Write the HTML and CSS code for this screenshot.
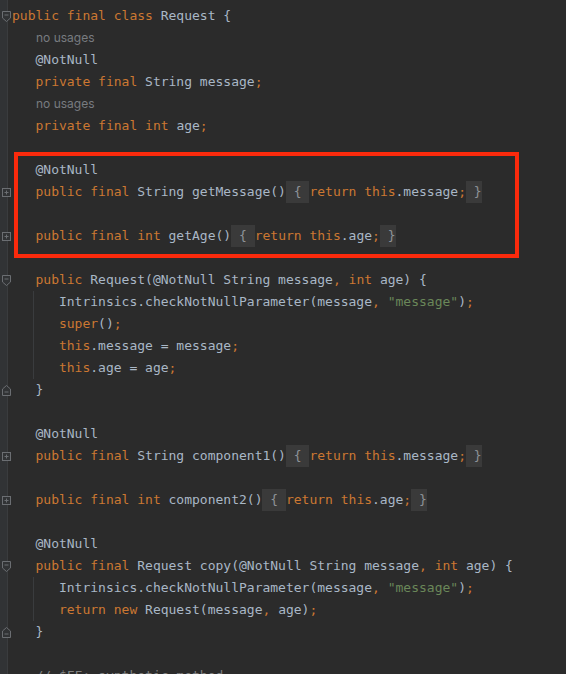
FILE: index.html
```html
<!DOCTYPE html>
<html>
<head>
<meta charset="utf-8">
<link rel="stylesheet" href="styles.css">
</head>
<body>
<div class="editor">
  <div class="gutter">
    <div class="row"><svg class="fold" width="9" height="11" viewBox="0 0 9 11"><path d="M0.5 0.5H8.5V7L4.5 10.5L0.5 7Z"/><path d="M2.5 4H6.5"/></svg></div>
    <div class="row"></div><div class="row"></div><div class="row"></div><div class="row"></div><div class="row"></div><div class="row"></div><div class="row"></div>
    <div class="row"><svg class="fold" width="9" height="9" viewBox="0 0 9 9"><rect x="0.5" y="0.5" width="8" height="8"/><path d="M2.5 4.5H6.5M4.5 2.5V6.5"/></svg></div>
    <div class="row"></div>
    <div class="row"><svg class="fold" width="9" height="9" viewBox="0 0 9 9"><rect x="0.5" y="0.5" width="8" height="8"/><path d="M2.5 4.5H6.5M4.5 2.5V6.5"/></svg></div>
    <div class="row"></div>
    <div class="row"><svg class="fold" width="9" height="11" viewBox="0 0 9 11"><path d="M0.5 0.5H8.5V7L4.5 10.5L0.5 7Z"/><path d="M2.5 4H6.5"/></svg></div>
    <div class="row"></div><div class="row"></div><div class="row"></div><div class="row"></div>
    <div class="row"><svg class="fold" width="9" height="11" viewBox="0 0 9 11"><path d="M0.5 10.5H8.5V4L4.5 0.5L0.5 4Z"/><path d="M2.5 7H6.5"/></svg></div>
    <div class="row"></div><div class="row"></div>
    <div class="row"><svg class="fold" width="9" height="9" viewBox="0 0 9 9"><rect x="0.5" y="0.5" width="8" height="8"/><path d="M2.5 4.5H6.5M4.5 2.5V6.5"/></svg></div>
    <div class="row"></div>
    <div class="row"><svg class="fold" width="9" height="9" viewBox="0 0 9 9"><rect x="0.5" y="0.5" width="8" height="8"/><path d="M2.5 4.5H6.5M4.5 2.5V6.5"/></svg></div>
    <div class="row"></div><div class="row"></div>
    <div class="row"><svg class="fold" width="9" height="11" viewBox="0 0 9 11"><path d="M0.5 0.5H8.5V7L4.5 10.5L0.5 7Z"/><path d="M2.5 4H6.5"/></svg></div>
    <div class="row"></div><div class="row"></div>
    <div class="row"><svg class="fold" width="9" height="11" viewBox="0 0 9 11"><path d="M0.5 10.5H8.5V4L4.5 0.5L0.5 4Z"/><path d="M2.5 7H6.5"/></svg></div>
    <div class="row"></div><div class="row"></div>
  </div>
  <div class="code">
<div class="line"><span class="kw">public final class </span>Request {</div>
<div class="line inlay">no usages</div>
<div class="line">   @NotNull</div>
<div class="line">   <span class="kw">private final </span>String message<span class="kw">;</span></div>
<div class="line inlay">no usages</div>
<div class="line">   <span class="kw">private final int </span>age<span class="kw">;</span></div>
<div class="line"> </div>
<div class="line">   @NotNull</div>
<div class="line">   <span class="kw">public final </span>String getMessage()<span class="fb"> { </span><span class="kw">return this</span>.message<span class="kw">;</span><span class="fb"> }</span></div>
<div class="line"> </div>
<div class="line">   <span class="kw">public final int </span>getAge()<span class="fb"> { </span><span class="kw">return this</span>.age<span class="kw">;</span><span class="fb"> }</span></div>
<div class="line"> </div>
<div class="line">   <span class="kw">public </span>Request(@NotNull String message<span class="kw">, int </span>age) {</div>
<div class="line guide">      Intrinsics.checkNotNullParameter(message<span class="kw">, </span><span class="str">"message"</span>)<span class="kw">;</span></div>
<div class="line guide">      <span class="kw">super</span>()<span class="kw">;</span></div>
<div class="line guide">      <span class="kw">this</span>.message = message<span class="kw">;</span></div>
<div class="line guide">      <span class="kw">this</span>.age = age<span class="kw">;</span></div>
<div class="line">   }</div>
<div class="line"> </div>
<div class="line">   @NotNull</div>
<div class="line">   <span class="kw">public final </span>String component1()<span class="fb"> { </span><span class="kw">return this</span>.message<span class="kw">;</span><span class="fb"> }</span></div>
<div class="line"> </div>
<div class="line">   <span class="kw">public final int </span>component2()<span class="fb"> { </span><span class="kw">return this</span>.age<span class="kw">;</span><span class="fb"> }</span></div>
<div class="line"> </div>
<div class="line">   @NotNull</div>
<div class="line">   <span class="kw">public final </span>Request copy(@NotNull String message<span class="kw">, int </span>age) {</div>
<div class="line guide">      Intrinsics.checkNotNullParameter(message<span class="kw">, </span><span class="str">"message"</span>)<span class="kw">;</span></div>
<div class="line guide">      <span class="kw">return new </span>Request(message<span class="kw">, </span>age)<span class="kw">;</span></div>
<div class="line">   }</div>
<div class="line"> </div>
<div class="line">   <span class="cm">// $FF: synthetic method</span></div>
  </div>
  <div class="highlight"></div>
</div>
</body>
</html>
```

FILE: styles.css
```css
html, body {
  margin: 0;
  padding: 0;
  background: #2b2b2b;
  height: 674px;
  overflow: hidden;
}

.editor {
  position: relative;
  display: flex;
  height: 674px;
  background: #2b2b2b;
}

.gutter {
  width: 12px;
  flex: none;
  padding-top: 5px;
  background: linear-gradient(to right, #313335 0, #313335 7px, #3a3c3e 7px, #3a3c3e 8px, #2b2b2b 8px);
}

.row {
  height: 22px;
  display: flex;
  align-items: center;
  padding-left: 2px;
}

.fold {
  fill: #313335;
  stroke: #6b6e72;
  stroke-width: 1;
}

.code {
  flex: 1;
  padding-top: 5px;
  font-family: "DejaVu Sans Mono", "Liberation Mono", monospace;
  font-size: 13px;
  color: #a9b7c6;
}

.line {
  height: 22px;
  line-height: 22px;
  white-space: pre;
}

.inlay {
  font-family: Inter, "Noto Sans", sans-serif;
  font-size: 12px;
  color: #787b80;
  padding-left: 24px;
}

.guide {
  background: linear-gradient(#3a3c3e, #3a3c3e) 21px 0 / 1px 100% no-repeat;
}

.kw { color: #cc7832; }
.str { color: #6a8759; }
.cm { color: #808080; }

.fb {
  display: inline-block;
  height: 22px;
  background: #3a3a3a;
  color: #8e9297;
}

.highlight {
  position: absolute;
  left: 14px;
  top: 152px;
  width: 505px;
  height: 106px;
  box-sizing: border-box;
  border: 4px solid #fb2a0c;
}
```
